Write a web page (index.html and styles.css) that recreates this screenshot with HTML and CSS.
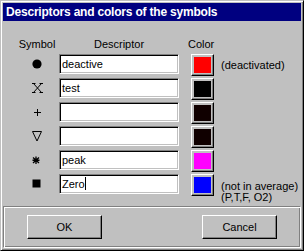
FILE: index.html
```html
<!DOCTYPE html>
<html lang="en">
<head>
    <meta charset="UTF-8">
    <title>Descriptors and colors of the symbols</title>
    <link rel="stylesheet" href="styles.css">
</head>
<body>
    <div class="dialog">
        <div class="titlebar">Descriptors and colors of the symbols</div>

        <div class="table">
            <div class="head">Symbol</div>
            <div class="head head-desc">Descriptor</div>
            <div class="head head-color">Color</div>
            <div></div>

            <!-- deactivated -->
            <div class="sym"><svg width="12" height="12" viewBox="0 0 12 12"><circle cx="6" cy="6" r="4.6" fill="#000"/></svg></div>
            <div class="cell"><div class="field">deactive</div></div>
            <div class="cell-color"><div class="swatch"><span style="background:#ff0000"></span></div></div>
            <div class="note">(deactivated)</div>

            <div class="sym"><svg width="12" height="12" viewBox="0 0 12 12" fill="none" stroke="#000" stroke-width="1"><path d="M2.5 1.5 L10.5 10.5 M10.5 1.5 L2.5 10.5 M1 1.5 H4.5 M8.5 1.5 H12 M1 10.5 H4.5 M8.5 10.5 H12"/></svg></div>
            <div class="cell"><div class="field">test</div></div>
            <div class="cell-color"><div class="swatch"><span style="background:#000000"></span></div></div>
            <div></div>

            <div class="sym"><svg width="12" height="12" viewBox="0 0 12 12" fill="none" stroke="#000" stroke-width="1"><path d="M6.5 3 V10 M3 6.5 H10"/></svg></div>
            <div class="cell"><div class="field"></div></div>
            <div class="cell-color"><div class="swatch"><span style="background:#100000"></span></div></div>
            <div></div>

            <div class="sym"><svg width="12" height="12" viewBox="0 0 12 12" fill="none" stroke="#000" stroke-width="1"><path d="M1.5 1.5 H10.5 L6 11 Z"/></svg></div>
            <div class="cell"><div class="field"></div></div>
            <div class="cell-color"><div class="swatch"><span style="background:#100000"></span></div></div>
            <div></div>

            <div class="sym"><svg width="12" height="12" viewBox="0 0 12 12" fill="none" stroke="#000" stroke-width="1.3"><path d="M5 7.5 V15 M2 8.5 L8 14 M8 8.5 L2 14 M1.5 11.25 H8.5" transform="translate(0,-5)"/></svg></div>
            <div class="cell"><div class="field">peak</div></div>
            <div class="cell-color"><div class="swatch"><span style="background:#ff00ff"></span></div></div>
            <div></div>

            <div class="sym"><svg width="12" height="12" viewBox="0 0 12 12"><rect x="1.5" y="1.5" width="8" height="8" fill="#000"/></svg></div>
            <div class="cell"><div class="field">Zero<span class="caret"></span></div></div>
            <div class="cell-color"><div class="swatch"><span style="background:#0000ff"></span></div></div>
            <div class="note note-last">(not in average)<br>(P,T,F, O2)</div>
        </div>

        <div class="footer">
            <button class="btn">OK</button>
            <button class="btn">Cancel</button>
        </div>
    </div>
</body>
</html>
```

FILE: styles.css
```css
body{
    margin: 0;
    background-color: #c0c0c0;
    font-family: "Liberation Sans", Arial, sans-serif;
    font-size: 11px;
    color: #000;
}
/* window frame */
.dialog{
    width: 304px;
    height: 251px;
    box-sizing: border-box;
    padding: 2px;
    background-color: #c0c0c0;
    border: 1px solid;
    border-color: #c0c0c0 #000 #000 #c0c0c0;
    box-shadow: inset 1px 1px #fff, inset -1px -1px #808080;
    display: flex;
    flex-direction: column;
}
.titlebar{
    height: 18px;
    line-height: 18px;
    padding-left: 3px;
    background-color: #000080;
    color: #fff;
    font-weight: bold;
    font-size: 12px;
    letter-spacing: -0.2px;
    white-space: nowrap;
}
/* symbol table */
.table{
    margin-top: 17px;
    padding-left: 14px;
    display: grid;
    grid-template-columns: 40px 122px 35px auto;
    grid-template-rows: 16px repeat(6, 24px);
}
.head{
    line-height: 13px;
    text-align: center;
}
.head-desc{
    padding-left: 2px;
}
.head-color{
    padding-left: 9px;
    padding-right: 6px;
}
.sym{
    height: 20px;
    display: flex;
    align-items: center;
    justify-content: center;
}
.sym svg{
    display: block;
}
.cell{
    padding-left: 2px;
}
.field{
    width: 120px;
    height: 20px;
    box-sizing: border-box;
    padding-left: 2px;
    line-height: 18px;
    background-color: #fff;
    border: 1px solid;
    border-color: #808080 #fff #fff #808080;
    box-shadow: inset 1px 1px #000, inset -1px -1px #c0c0c0;
    white-space: nowrap;
}
.caret{
    display: inline-block;
    width: 1px;
    height: 13px;
    background-color: #000;
    vertical-align: -2px;
}
.cell-color{
    padding-left: 12px;
}
.swatch{
    width: 23px;
    height: 22px;
    box-sizing: border-box;
    padding: 2px;
    border: 1px solid;
    border-color: #fff #000 #000 #fff;
    box-shadow: inset -1px -1px #808080;
    display: flex;
}
.swatch span{
    flex: 1;
}
.note{
    padding-left: 7px;
    padding-top: 5px;
    line-height: 13px;
    white-space: nowrap;
}
.note-last{
    padding-top: 7px;
    line-height: 11px;
}
/* buttons */
.footer{
    flex: 1;
    margin-top: 8px;
    padding: 8px 0 0 23px;
    border: 1px solid;
    border-color: #808080 #fff #fff #808080;
    box-shadow: inset 1px 1px #fff, inset -1px -1px #808080;
    display: flex;
    align-items: flex-start;
    gap: 100px;
}
.btn{
    width: 75px;
    height: 24px;
    padding: 0;
    background-color: #c0c0c0;
    border: 1px solid;
    border-color: #fff #000 #000 #fff;
    box-shadow: inset -1px -1px #808080;
    font-family: "Liberation Sans", Arial, sans-serif;
    font-size: 11px;
    color: #000;
}
```
